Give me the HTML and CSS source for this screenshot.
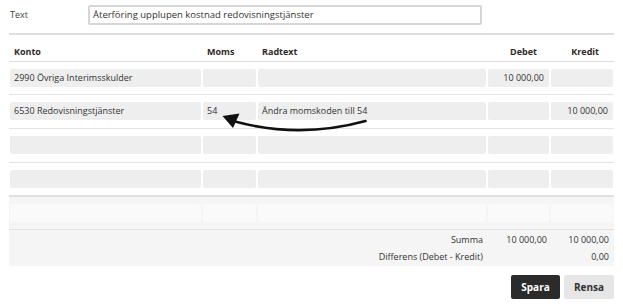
FILE: index.html
```html
<!DOCTYPE html>
<html lang="sv">
<head>
<meta charset="utf-8">
<title>Verifikation</title>
<link rel="stylesheet" href="styles.css">
</head>
<body>
<div class="page">
  <div class="text-row">
    <label class="text-label">Text</label>
    <div class="text-input">Återföring upplupen kostnad redovisningstjänster</div>
  </div>
  <div class="rule"></div>

  <div class="table">
    <div class="row head">
      <div class="th">Konto</div>
      <div class="th">Moms</div>
      <div class="th">Radtext</div>
      <div class="th num">Debet</div>
      <div class="th num kr">Kredit</div>
    </div>
    <div class="row">
      <div class="cell">2990 Övriga Interimsskulder</div>
      <div class="cell"></div>
      <div class="cell"></div>
      <div class="cell num">10 000,00</div>
      <div class="cell num"></div>
    </div>
    <div class="row tall">
      <div class="cell">6530 Redovisningstjänster</div>
      <div class="cell">54</div>
      <div class="cell">Ändra momskoden till 54</div>
      <div class="cell num"></div>
      <div class="cell num">10 000,00</div>
    </div>
    <div class="row tall">
      <div class="cell"></div>
      <div class="cell"></div>
      <div class="cell"></div>
      <div class="cell"></div>
      <div class="cell"></div>
    </div>
    <div class="row last">
      <div class="cell"></div>
      <div class="cell"></div>
      <div class="cell"></div>
      <div class="cell"></div>
      <div class="cell"></div>
    </div>

    <div class="foot">
      <div class="row empty">
        <div class="cell"></div>
        <div class="cell"></div>
        <div class="cell"></div>
        <div class="cell"></div>
        <div class="cell"></div>
      </div>
      <div class="sums">
        <div class="sum-row">
          <div class="sum-label">Summa</div>
          <div class="sum-val">10 000,00</div>
          <div class="sum-val kr">10 000,00</div>
        </div>
        <div class="sum-row">
          <div class="sum-label">Differens (Debet - Kredit)</div>
          <div class="sum-val"></div>
          <div class="sum-val kr">0,00</div>
        </div>
      </div>
    </div>
  </div>

  <div class="actions">
    <button class="btn primary">Spara</button>
    <button class="btn secondary">Rensa</button>
  </div>

  <svg class="arrow" width="623" height="308" viewBox="0 0 623 308" aria-hidden="true">
    <path d="M 365.5 121 Q 300 139 235 121.5" fill="none" stroke="#111" stroke-width="2.6" stroke-linecap="round"/>
    <polygon points="222.5,116 239.5,113.5 233,128" fill="#111"/>
  </svg>
</div>
</body>
</html>
```

FILE: styles.css
```css
* { box-sizing: border-box; }

html, body {
  margin: 0;
  padding: 0;
  background: #fff;
}

body {
  font-family: "Open Sans", "Liberation Sans", sans-serif;
  font-size: 9px;
  color: #333;
}

.page {
  position: relative;
  width: 623px;
  height: 308px;
  padding: 5px 9px 0 9px;
}

.text-row {
  display: flex;
  align-items: center;
  height: 20px;
}

.text-label {
  width: 79px;
  padding-left: 1px;
  color: #444;
  margin-top: -2px;
}

.text-input {
  width: 394px;
  height: 20px;
  border: 2px solid #d6d6d6;
  border-radius: 2px;
  padding: 0 3px;
  line-height: 16px;
  color: #333;
  font-size: 9.5px;
}

.rule {
  height: 2px;
  background: #dedede;
  margin-top: 8px;
  width: 605px;
}

.table {
  width: 605px;
}

.row {
  display: grid;
  grid-template-columns: 193px 55px 230px 63px 64px;
  padding: 7px 0 7px;
  border-bottom: 1px solid #e4e4e4;
}

.row.tall {
  padding-bottom: 8px;
}

.row.head {
  padding: 11px 0 3px;
  line-height: 12px;
  border-bottom: 1px solid #dcdcdc;
}

.th {
  font-weight: 700;
  color: #2f2a26;
  padding-left: 5px;
}

.th.num {
  text-align: right;
  padding-right: 13px;
}

.th.num.kr {
  padding-right: 15px;
}

.cell {
  height: 18px;
  line-height: 18px;
  margin: 0 1px;
  padding: 0 4px;
  background: #eeeeee;
  border-radius: 2px;
  white-space: nowrap;
  overflow: hidden;
}

.cell.num {
  text-align: right;
  padding-right: 5px;
}

.row.last {
  border-bottom: none;
}

.foot {
  background: #f5f5f5;
  border-top: 2px solid #e0e0e0;
}

.row.empty {
  border-bottom: 1px solid #e3e3e3;
}

.row.empty .cell {
  background: #fafafa;
}

.sums {
  padding: 1px 0 1px;
}

.sum-row {
  display: grid;
  grid-template-columns: 478px 63px 64px;
  line-height: 17px;
}

.sum-label {
  text-align: right;
  padding-right: 4px;
}

.sum-val {
  text-align: right;
  padding-right: 3px;
}

.sum-val.kr {
  padding-right: 5px;
}

.actions {
  display: flex;
  justify-content: flex-end;
  gap: 4px;
  margin-top: 9px;
  width: 605px;
}

.btn {
  height: 24px;
  border: none;
  border-radius: 2px;
  font-family: "Open Sans", "Liberation Sans", sans-serif;
  font-size: 10px;
  font-weight: 700;
  padding: 0;
  cursor: pointer;
}

.btn.primary {
  width: 49px;
  background: #2b2b2b;
  color: #fff;
}

.btn.secondary {
  width: 50px;
  background: #e6e6e6;
  color: #333;
}

.arrow {
  position: absolute;
  left: 0;
  top: 0;
  pointer-events: none;
}
```
